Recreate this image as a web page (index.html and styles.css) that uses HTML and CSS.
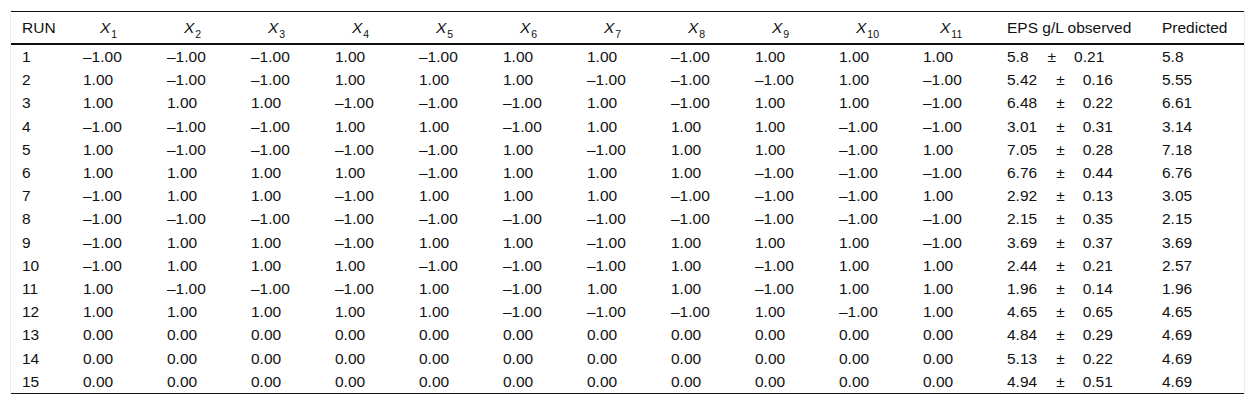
FILE: index.html
```html
<!DOCTYPE html>
<html>
<head>
  <title>EPS design table</title>
  <meta charset="UTF-8">
  <link rel="stylesheet" href="styles.css">
</head>
<body>
  <div class="table-wrap">
    <table class="data-table">
      <colgroup>
        <col class="col-run">
        <col class="col-x"><col class="col-x"><col class="col-x"><col class="col-x">
        <col class="col-x"><col class="col-x"><col class="col-x"><col class="col-x">
        <col class="col-x"><col class="col-x"><col class="col-x">
        <col class="col-eps">
        <col class="col-pred">
      </colgroup>
      <thead>
        <tr>
          <th class="run">RUN</th>
          <th class="var"><i>X</i><sub>1</sub></th>
          <th class="var"><i>X</i><sub>2</sub></th>
          <th class="var"><i>X</i><sub>3</sub></th>
          <th class="var"><i>X</i><sub>4</sub></th>
          <th class="var"><i>X</i><sub>5</sub></th>
          <th class="var"><i>X</i><sub>6</sub></th>
          <th class="var"><i>X</i><sub>7</sub></th>
          <th class="var"><i>X</i><sub>8</sub></th>
          <th class="var"><i>X</i><sub>9</sub></th>
          <th class="var"><i>X</i><sub>10</sub></th>
          <th class="var"><i>X</i><sub>11</sub></th>
          <th>EPS g/L observed</th>
          <th>Predicted</th>
        </tr>
      </thead>
      <tbody>
        <tr><td class="run">1</td><td>–1.00</td><td>–1.00</td><td>–1.00</td><td>1.00</td><td>–1.00</td><td>1.00</td><td>1.00</td><td>–1.00</td><td>1.00</td><td>1.00</td><td>1.00</td><td><span class="val">5.8</span><span class="pm">±</span><span class="err">0.21</span></td><td>5.8</td></tr>
        <tr><td class="run">2</td><td>1.00</td><td>–1.00</td><td>–1.00</td><td>1.00</td><td>1.00</td><td>1.00</td><td>–1.00</td><td>–1.00</td><td>–1.00</td><td>1.00</td><td>–1.00</td><td><span class="val">5.42</span><span class="pm">±</span><span class="err">0.16</span></td><td>5.55</td></tr>
        <tr><td class="run">3</td><td>1.00</td><td>1.00</td><td>1.00</td><td>–1.00</td><td>–1.00</td><td>–1.00</td><td>1.00</td><td>–1.00</td><td>1.00</td><td>1.00</td><td>–1.00</td><td><span class="val">6.48</span><span class="pm">±</span><span class="err">0.22</span></td><td>6.61</td></tr>
        <tr><td class="run">4</td><td>–1.00</td><td>–1.00</td><td>–1.00</td><td>1.00</td><td>1.00</td><td>–1.00</td><td>1.00</td><td>1.00</td><td>1.00</td><td>–1.00</td><td>–1.00</td><td><span class="val">3.01</span><span class="pm">±</span><span class="err">0.31</span></td><td>3.14</td></tr>
        <tr><td class="run">5</td><td>1.00</td><td>–1.00</td><td>–1.00</td><td>–1.00</td><td>–1.00</td><td>1.00</td><td>–1.00</td><td>1.00</td><td>1.00</td><td>–1.00</td><td>1.00</td><td><span class="val">7.05</span><span class="pm">±</span><span class="err">0.28</span></td><td>7.18</td></tr>
        <tr><td class="run">6</td><td>1.00</td><td>1.00</td><td>1.00</td><td>1.00</td><td>–1.00</td><td>1.00</td><td>1.00</td><td>1.00</td><td>–1.00</td><td>–1.00</td><td>–1.00</td><td><span class="val">6.76</span><span class="pm">±</span><span class="err">0.44</span></td><td>6.76</td></tr>
        <tr><td class="run">7</td><td>–1.00</td><td>1.00</td><td>1.00</td><td>–1.00</td><td>1.00</td><td>1.00</td><td>1.00</td><td>–1.00</td><td>–1.00</td><td>–1.00</td><td>1.00</td><td><span class="val">2.92</span><span class="pm">±</span><span class="err">0.13</span></td><td>3.05</td></tr>
        <tr><td class="run">8</td><td>–1.00</td><td>–1.00</td><td>–1.00</td><td>–1.00</td><td>–1.00</td><td>–1.00</td><td>–1.00</td><td>–1.00</td><td>–1.00</td><td>–1.00</td><td>–1.00</td><td><span class="val">2.15</span><span class="pm">±</span><span class="err">0.35</span></td><td>2.15</td></tr>
        <tr><td class="run">9</td><td>–1.00</td><td>1.00</td><td>1.00</td><td>–1.00</td><td>1.00</td><td>1.00</td><td>–1.00</td><td>1.00</td><td>1.00</td><td>1.00</td><td>–1.00</td><td><span class="val">3.69</span><span class="pm">±</span><span class="err">0.37</span></td><td>3.69</td></tr>
        <tr><td class="run">10</td><td>–1.00</td><td>1.00</td><td>1.00</td><td>1.00</td><td>–1.00</td><td>–1.00</td><td>–1.00</td><td>1.00</td><td>–1.00</td><td>1.00</td><td>1.00</td><td><span class="val">2.44</span><span class="pm">±</span><span class="err">0.21</span></td><td>2.57</td></tr>
        <tr><td class="run">11</td><td>1.00</td><td>–1.00</td><td>–1.00</td><td>–1.00</td><td>1.00</td><td>–1.00</td><td>1.00</td><td>1.00</td><td>–1.00</td><td>1.00</td><td>1.00</td><td><span class="val">1.96</span><span class="pm">±</span><span class="err">0.14</span></td><td>1.96</td></tr>
        <tr><td class="run">12</td><td>1.00</td><td>1.00</td><td>1.00</td><td>1.00</td><td>1.00</td><td>–1.00</td><td>–1.00</td><td>–1.00</td><td>1.00</td><td>–1.00</td><td>1.00</td><td><span class="val">4.65</span><span class="pm">±</span><span class="err">0.65</span></td><td>4.65</td></tr>
        <tr><td class="run">13</td><td>0.00</td><td>0.00</td><td>0.00</td><td>0.00</td><td>0.00</td><td>0.00</td><td>0.00</td><td>0.00</td><td>0.00</td><td>0.00</td><td>0.00</td><td><span class="val">4.84</span><span class="pm">±</span><span class="err">0.29</span></td><td>4.69</td></tr>
        <tr><td class="run">14</td><td>0.00</td><td>0.00</td><td>0.00</td><td>0.00</td><td>0.00</td><td>0.00</td><td>0.00</td><td>0.00</td><td>0.00</td><td>0.00</td><td>0.00</td><td><span class="val">5.13</span><span class="pm">±</span><span class="err">0.22</span></td><td>4.69</td></tr>
        <tr><td class="run">15</td><td>0.00</td><td>0.00</td><td>0.00</td><td>0.00</td><td>0.00</td><td>0.00</td><td>0.00</td><td>0.00</td><td>0.00</td><td>0.00</td><td>0.00</td><td><span class="val">4.94</span><span class="pm">±</span><span class="err">0.51</span></td><td>4.69</td></tr>
      </tbody>
    </table>
  </div>
</body>
</html>
```

FILE: styles.css
```css
body {
  margin: 0;
  background-color: #ffffff;
  color: #111;
  font-family: "Liberation Sans", Arial, Helvetica, sans-serif;
  font-size: 15.5px;
}

.table-wrap {
  margin: 11px 10px 0 10px;
  width: 1233px;
  border-left: 1px solid #ededed;
  border-right: 1px solid #ededed;
}

.data-table {
  width: 1233px;
  table-layout: fixed;
  border-collapse: collapse;
  border-top: 1px solid #111;
  border-bottom: 1px solid #111;
}

.col-run { width: 66px; }
.col-x { width: 84px; }
.col-eps { width: 155px; }
.col-pred { width: 88px; }

.data-table th {
  height: 31px;
  padding: 0 6px;
  text-align: left;
  font-weight: normal;
  border-bottom: 2px solid #111;
  white-space: nowrap;
}
.data-table th.var {
  padding-left: 23px;
}
.data-table th sub {
  font-size: 10.5px;
  vertical-align: -5px;
  line-height: 0;
  margin-left: 1px;
}

.data-table td {
  height: 23.2px;
  padding: 0 6px;
  line-height: 17px;
  white-space: nowrap;
}
.data-table .run {
  padding-left: 11px;
}

.val {
  display: inline-block;
}
.pm {
  display: inline-block;
  margin-left: 19px;
}
.err {
  display: inline-block;
  margin-left: 18px;
}
```
